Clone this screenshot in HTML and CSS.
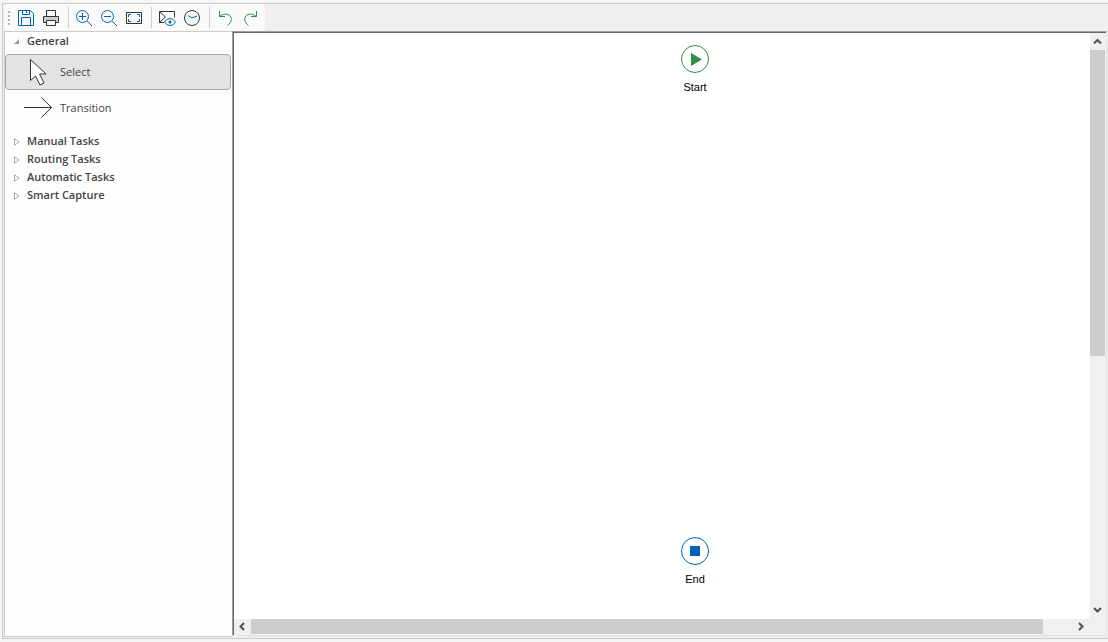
FILE: index.html
```html
<!DOCTYPE html>
<html lang="en">
<head>
    <meta charset="UTF-8">
    <meta name="viewport" content="width=device-width, initial-scale=1.0">
    <title>Workflow Designer</title>
    <link rel="stylesheet" href="styles.css">
</head>
<body>
    <div class="frame">
        <header class="toolbar">
            <span class="grip"><i></i><i></i><i></i><i></i></span>
            <button class="tool" aria-label="Save">
                <svg class="blue" width="18" height="18" viewBox="0 0 18 18"><path d="M1.5 1.5h12l3 3v12h-15zM5.5 1.5v4h7v-4M9.500 2v2M4.500 16.500v-8h9v8"/></svg>
            </button>
            <button class="tool" aria-label="Print">
                <svg class="dark" width="18" height="18" viewBox="0 0 18 18"><path d="M4.500 7.500v-6h9v6"/><path d="M1.500 7.500h15v6h-15z" fill="#ccc"/><path d="M4.500 11.500h9v5h-9z" fill="#fafafa"/></svg>
            </button>
            <span class="separator"></span>
            <button class="tool" aria-label="Zoom in">
                <svg class="blue" width="18" height="18" viewBox="0 0 18 18"><circle cx="7.500" cy="7.500" r="6"/><path d="M12 12l5 5M4 7.500h7M7.500 4v7"/></svg>
            </button>
            <button class="tool" aria-label="Zoom out">
                <svg class="blue" width="18" height="18" viewBox="0 0 18 18"><circle cx="7.500" cy="7.500" r="6"/><path d="M12 12l5 5M4 7.500h7"/></svg>
            </button>
            <button class="tool" aria-label="Fit to window">
                <svg class="dark" width="18" height="18" viewBox="0 0 18 18"><path d="M1.500 3.500h15v11h-15z"/><path class="blue" d="M3.500 8v-2.500h2.500M12 5.500h2.500v2.500M14.500 10v2.500h-2.500M6 12.500h-2.500v-2.500"/></svg>
            </button>
            <span class="separator"></span>
            <button class="tool" aria-label="Preview">
                <svg class="dark" width="18" height="18" viewBox="0 0 18 18"><path d="M6 13.500h-4.500v-11h15v6M1.500 2.500l6 5.500-6 5.500"/><path class="blue" d="M6.500 13q2-3.500 5.500-3.500t5.500 3.500q-2 3.500-5.500 3.500t-5.500-3.500z" fill="#fafafa"/><circle cx="12" cy="13" r="1.500" fill="#0063b1" stroke="none"/></svg>
            </button>
            <button class="tool" aria-label="Schedule">
                <svg class="dark" width="18" height="18" viewBox="0 0 18 18"><circle cx="9" cy="9" r="7.500"/><path class="blue" d="M5 6.500l4 2.500 5-2"/></svg>
            </button>
            <span class="separator"></span>
            <button class="tool" aria-label="Undo">
                <svg class="green" width="18" height="18" viewBox="0 0 18 18"><path d="M3.500 2v5.500h5.500M3.500 7.500c3-2.500 7-3 9.500-1.500 3.500 2.500 3 7-1.500 10.500"/></svg>
            </button>
            <button class="tool" aria-label="Redo">
                <svg class="green" width="18" height="18" viewBox="0 0 18 18"><path d="M15.500 2v5.500h-5.500M15.500 7.500c-3-2.500-7-3-9.500-1.500-3.500 2.500-3 7 1.500 10.500"/></svg>
            </button>
        </header>

        <main class="workspace">
            <nav class="sidebar">
                <button class="group" aria-expanded="true">
                    <svg width="7" height="9" viewBox="0 -2 7 9"><path d="M6 1v5h-5z" fill="#999"/></svg>
                    General
                </button>
                <div class="items">
                    <button class="item selected">
                        <svg width="30" height="30" viewBox="0 0 30 30"><path d="M6.500 3.500v21l5-4.500 4.500 9 4-2-4.500-9h6.500z" fill="#fff" stroke="#333"/></svg>
                        Select
                    </button>
                    <button class="item">
                        <svg width="30" height="30" viewBox="0 0 30 30"><path d="M0 15.500h27.500M17.500 5.500l10 10-10 10" fill="none" stroke="#333"/></svg>
                        Transition
                    </button>
                </div>
                <button class="group" aria-expanded="false">
                    <svg width="7" height="12" viewBox="0 -4 7 12"><path d="M1.500 .8v6.400l4.500-3.200z" fill="#fff" stroke="#aaa"/></svg>
                    Manual Tasks
                </button>
                <button class="group" aria-expanded="false">
                    <svg width="7" height="12" viewBox="0 -4 7 12"><path d="M1.500 .8v6.400l4.500-3.200z" fill="#fff" stroke="#aaa"/></svg>
                    Routing Tasks
                </button>
                <button class="group" aria-expanded="false">
                    <svg width="7" height="12" viewBox="0 -4 7 12"><path d="M1.500 .8v6.400l4.500-3.200z" fill="#fff" stroke="#aaa"/></svg>
                    Automatic Tasks
                </button>
                <button class="group" aria-expanded="false">
                    <svg width="7" height="12" viewBox="0 -4 7 12"><path d="M1.500 .8v6.400l4.500-3.200z" fill="#fff" stroke="#aaa"/></svg>
                    Smart Capture
                </button>
            </nav>

            <section class="designer">
                <div class="canvas">
                    <div class="node start">
                        <svg width="28" height="28" viewBox="0 0 28 28"><circle cx="14" cy="14" r="13.500" fill="#fff" stroke="#2f9149"/><path d="M10 8v13l11-6.500z" fill="#2f9149"/></svg>
                        <span>Start</span>
                    </div>
                    <div class="node end">
                        <svg width="28" height="28" viewBox="0 0 28 28"><circle cx="14" cy="14" r="13.500" fill="#fff" stroke="#0063b1"/><path d="M9 9h10v10h-10z" fill="#0063b1"/></svg>
                        <span>End</span>
                    </div>
                </div>
                <div class="scrollbar vertical">
                    <button aria-label="Scroll up"><svg width="9" height="9" viewBox="0 0 9 9"><path d="M1 6.500l3.500-3.500 3.500 3.500"/></svg></button>
                    <div class="track"><div class="thumb" style="height: 55.4%"></div></div>
                    <button aria-label="Scroll down"><svg width="9" height="9" viewBox="0 0 9 9"><path d="M1 2l3.500 3.500 3.500-3.500"/></svg></button>
                </div>
                <div class="scrollbar horizontal">
                    <button aria-label="Scroll left"><svg width="9" height="9" viewBox="0 0 9 9"><path d="M6 1l-3.500 3.500 3.500 3.500"/></svg></button>
                    <div class="track"><div class="thumb" style="width: 96.4%"></div></div>
                    <button aria-label="Scroll right"><svg width="9" height="9" viewBox="0 0 9 9"><path d="M2 1l3.500 3.500-3.500 3.500"/></svg></button>
                </div>
            </section>
        </main>
    </div>
</body>
</html>
```
FILE: styles.css
```css
* {
    box-sizing: border-box;
}
body {
    display: flex;
    height: 100vh;
    margin: 0;
    padding: 3px 0 3px 2px;
    background-color: #f5f5f5;
    font-family: "Open Sans", "Noto Sans", sans-serif;
    font-size: 11px;
    color: #444;
}
button {
    margin: 0;
    padding: 0;
    border: none;
    background: none;
    font: inherit;
    color: inherit;
}
svg {
    display: block;
    flex: none;
}
.frame {
    flex: 1;
    display: flex;
    flex-direction: column;
    min-width: 0;
    padding: 0 1px 1px;
    border: 1px solid #ccc;
    border-right: none;
    background-color: #efefef;
}

/* toolbar */
.toolbar {
    display: flex;
    align-items: center;
    align-self: flex-start;
    height: 27px;
    padding-right: 3px;
    border-radius: 4px;
    background-color: #fafafa;
}
.grip {
    display: flex;
    flex-direction: column;
    gap: 2px;
    width: 9px;
    padding-left: 4px;
}
.grip i {
    width: 2px;
    height: 2px;
    background-color: #b5b5b5;
}
.tool {
    display: flex;
    align-items: center;
    justify-content: center;
    width: 25px;
    height: 25px;
}
.tool svg {
    fill: none;
}
.blue {
    stroke: #0063b1;
}
.dark {
    stroke: #333;
}
.green {
    stroke: #2f9149;
}
.separator {
    width: 1px;
    height: 21px;
    margin: 0 2px 0 5px;
    background-color: #ccc;
}

/* task list */
.workspace {
    flex: 1;
    display: flex;
    min-height: 0;
}
.sidebar {
    flex: none;
    width: 228px;
    border: 1px solid #ccc;
    border-right: none;
    background-color: #fdfdfd;
}
.group {
    display: flex;
    align-items: center;
    gap: 7px;
    width: 100%;
    height: 18px;
    padding: 0 0 2px 8px;
    font-weight: 600;
}
.items {
    padding: 4px 1px 6px 0;
}
.item {
    display: flex;
    align-items: center;
    gap: 6px;
    width: 100%;
    height: 36px;
    padding: 0 0 2px 18px;
    border: 1px solid transparent;
    border-radius: 4px;
}
.item.selected {
    border-color: #aaa;
    background-color: #e3e3e3;
}

/* designer */
.designer {
    flex: 1;
    display: grid;
    grid-template-columns: 1fr 16px;
    grid-template-rows: 1fr 16px;
    min-width: 0;
    margin-bottom: 1px;
    padding: 1px 0 0 1px;
    border: 1px solid #e3e3e3;
    border-top-color: #a0a0a0;
    border-left-color: #a0a0a0;
    background-color: #f0f0f0;
    box-shadow: inset 1px 1px #696969;
}
.canvas {
    position: relative;
    overflow: hidden;
    background-color: #fff;
}
.node {
    position: absolute;
    left: 441px;
    display: flex;
    flex-direction: column;
    align-items: center;
    gap: 7px;
    width: 40px;
    font-family: "Liberation Sans", Arial, sans-serif;
    line-height: 14px;
    color: #000;
}
.start {
    top: 12px;
}
.end {
    top: 504px;
}
.scrollbar {
    display: flex;
}
.scrollbar button {
    display: flex;
    align-items: center;
    justify-content: center;
    flex: none;
    width: 17px;
    height: 17px;
}
.scrollbar path {
    fill: none;
    stroke: #505050;
    stroke-width: 2;
}
.vertical {
    flex-direction: column;
    padding-right: 1px;
}
.vertical button {
    width: 15px;
}
.horizontal {
    padding-bottom: 1px;
}
.horizontal button {
    height: 15px;
}
.track {
    flex: 1;
}
.thumb {
    width: 100%;
    height: 100%;
    background-color: #cdcdcd;
}
```
